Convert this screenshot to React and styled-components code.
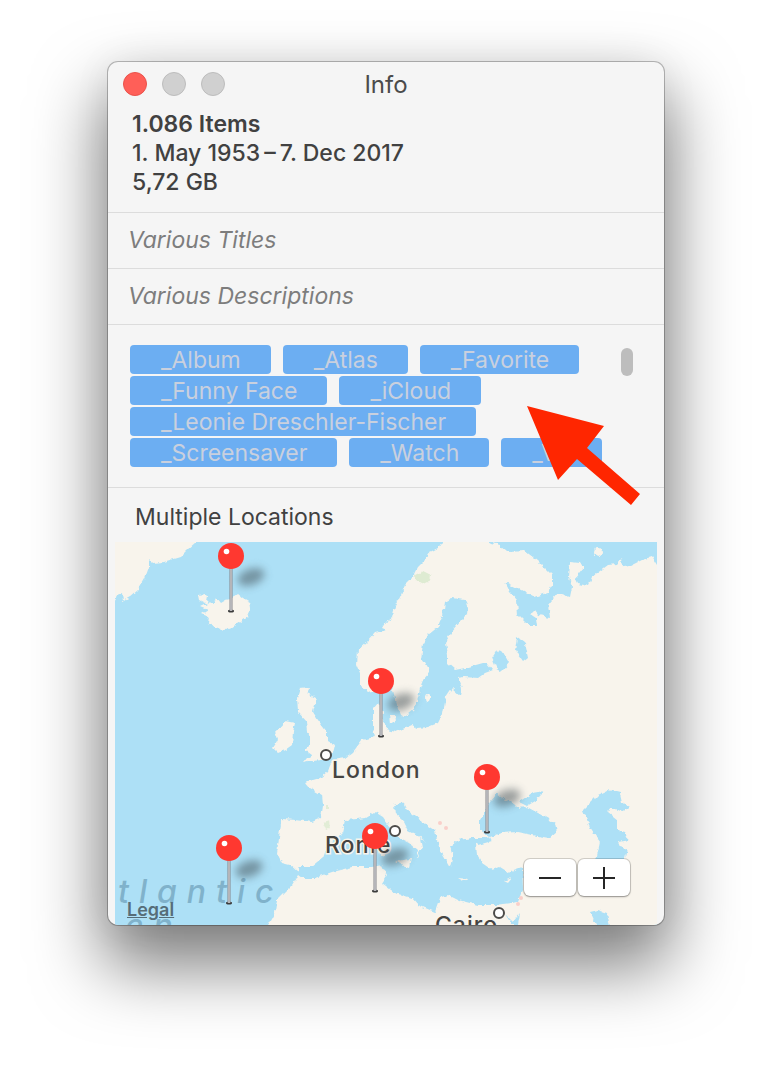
import styled, { createGlobalStyle } from "styled-components";

const keywords = [
    "_Album",
    "_Atlas",
    "_Favorite",
    "_Funny Face",
    "_iCloud",
    "_Leonie Dreschler-Fischer",
    "_Screensaver",
    "_Watch",
    "_VR",
];

const pins = [
    { id: "iceland", x: 231, y: 611 },
    { id: "denmark", x: 381, y: 736 },
    { id: "bosporus", x: 487, y: 832 },
    { id: "madeira", x: 229, y: 903 },
    { id: "tunisia", x: 375, y: 891 },
];

const cities = [
    { name: "London", dotX: 326, dotY: 755, x: 332, y: 778 },
    { name: "Rome", dotX: 395, dotY: 831, x: 325, y: 853 },
    { name: "Cairo", dotX: 499, dotY: 913, x: 435, y: 933 },
];

const land = [
    // Greenland
    "105,532 206,532 196,542 187,550 180,557 163,562 153,563 149,559 149,567 145,578 138,590 130,597 123,601 122,593 117,595 115,602 105,604",
    // Iceland
    "198,595 205,594 208,597 207,602 213,604 216,598 220,603 225,600 231,599 238,594 243,598 250,602 251,608 247,617 238,623 231,628 225,630 215,627 208,623 209,617 202,614 208,610 201,607 207,604 199,600",
    // Europe, Asia and North Africa
    "442,542 438,548 430,552 425,560 418,567 413,577 405,585 401,595 395,607 392,618 385,623 382,628 387,630 375,633 367,642 358,650 357,665 360,672 360,685 368,692 378,690 387,685 392,687 395,698 398,708 402,717 407,715 415,708 418,698 420,688 423,680 430,672 425,663 421,658 423,645 428,635 438,627 443,615 445,602 452,598 465,600 468,607 467,615 460,622 452,632 445,643 447,655 447,663 455,670 465,668 483,663 487,663 493,670 485,673 478,678 465,677 458,678 462,688 461,696 452,688 446,697 443,713 438,723 428,727 418,728 412,725 405,728 395,732 387,730 386,724 382,722 383,712 378,702 373,708 373,727 375,737 362,740 353,752 345,758 332,760 327,772 320,778 313,780 305,782 310,788 322,795 323,805 321,818 312,822 295,820 282,819 280,830 277,853 282,863 290,865 298,872 300,867 312,867 323,858 327,847 342,833 345,820 357,819 365,818 375,812 383,817 390,827 398,837 410,843 418,850 417,857 422,848 420,838 427,843 418,835 408,830 403,820 395,813 394,805 403,802 407,810 420,820 435,830 437,840 442,853 450,867 453,855 450,847 458,840 472,838 484,838 490,840 476,844 477,855 482,863 492,870 500,867 508,872 522,867 523,890 518,902 495,905 478,905 458,900 448,895 440,898 435,912 418,905 412,898 395,893 382,883 387,875 382,865 372,867 352,867 332,872 315,878 302,878 298,875 292,885 277,900 275,912 262,935 667,935 667,532 442,532",
    // Great Britain
    "300,688 310,687 307,693 317,698 313,712 318,720 327,732 327,740 335,745 333,753 323,760 313,761 303,763 307,758 312,755 305,750 310,745 310,738 308,732 307,722 298,712 297,698",
    // Ireland
    "275,732 285,721 295,723 293,732 292,745 285,750 278,753 273,748 278,740",
    // Sicily, Zealand and Sardinia
    "395,861 411,859 409,867 402,865",
    "389,715 395,715 396,722 390,724",
    "379,843 385,842 385,856 380,857",
];

const water = [
    // Barents and White Sea
    "488,532 488,542 500,545 508,552 525,551 538,561 552,575 552,585 547,593 535,597 522,590 505,582 510,592 517,600 518,615 528,625 537,625 536,618 530,614 535,611 538,615 550,617 548,605 558,593 570,597 572,587 569,578 570,562 580,563 583,568 575,578 578,584 588,586 592,577 608,565 617,564 622,558 623,567 630,566 642,560 652,557 657,565 667,566 667,532",
    // Ladoga and Onega
    "497,650 503,652 509,663 503,670 498,672 492,658",
    "517,637 525,643 528,657 523,661 515,650",
    // Black Sea and Azov
    "497,794 504,799 513,803 518,808 527,807 538,813 555,823 557,832 550,838 532,835 517,832 502,833 490,837 480,830 480,820 490,802",
    "519,802 532,793 544,791 537,800 527,806",
    // Caspian Sea
    "583,810 598,795 608,790 620,793 622,802 630,807 622,812 610,807 608,812 618,820 618,830 625,832 629,840 618,842 620,847 627,849 623,865 595,865 600,842 590,827",
    // Persian Gulf and Red Sea
    "590,912 598,910 607,913 612,935 600,935",
    "505,914 513,922 520,913 518,925 512,925",
];

const InfoMap = () => {
    return (
        <MapSvg viewBox="115 542 542 383" preserveAspectRatio="xMidYMid slice" role="img" aria-label="Map">
            <defs>
                <filter id="coast" x="-5%" y="-5%" width="110%" height="110%">
                    <feTurbulence type="fractalNoise" baseFrequency="0.2" numOctaves="2" seed="4" />
                    <feDisplacementMap in="SourceGraphic" scale="5" xChannelSelector="R" yChannelSelector="G" />
                </filter>
                <filter id="soft" x="-60%" y="-100%" width="220%" height="300%">
                    <feGaussianBlur stdDeviation="4" />
                </filter>
                <linearGradient id="needle">
                    <stop offset="0" stopColor="#85858a" />
                    <stop offset="0.5" stopColor="#cdcdd0" />
                    <stop offset="1" stopColor="#85858a" />
                </linearGradient>
            </defs>
            <rect x="105" y="532" width="562" height="403" fill="#ade0f6" />
            <g filter="url(#coast)">
                {land.map((points) => <polygon key={points} points={points} fill="#f8f4ec" />)}
                {water.map((points) => <polygon key={points} points={points} fill="#ade0f6" />)}
                <path d="M474 841l16-4 2 4-14 4z" fill="#ade0f6" />
                <ellipse cx="598" cy="552" rx="4" ry="5" fill="#f8f4ec" />
                <ellipse cx="428" cy="697" rx="2" ry="4" fill="#f8f4ec" />
                <path d="M504 881l8-3-4 5z M458 878l10 1-5 2z" fill="#f8f4ec" />
                <path d="M415 575l8-4 8 4-1 6-6 3-8-4z" fill="#deebd2" />
                <path d="M323 823l6-2 1 7-4 2z M326 805l3 0 0 4-3 0z" fill="#e2edd6" />
            </g>
            <g fill="#f9cfca">
                <circle cx="440" cy="823" r="2" />
                <circle cx="446" cy="828" r="2" />
                <circle cx="521" cy="898" r="2" />
                <circle cx="518" cy="904" r="2" />
            </g>
            <OceanLabel x="118" y="903">tlantic</OceanLabel>
            <OceanLabel x="125" y="937">en</OceanLabel>
            {cities.map(({ name, dotX, dotY, x, y }) => (
                <g key={name}>
                    <circle cx={dotX} cy={dotY} r="5" fill="#fff" stroke="#4c4b49" strokeWidth="2" />
                    <CityLabel x={x} y={y}>{name}</CityLabel>
                </g>
            ))}
            {pins.map(({ id, x, y }) => (
                <g key={id} transform={`translate(${x} ${y})`}>
                    <ellipse cx="20" cy="-34" rx="14" ry="8" fill="#3c4a50" opacity="0.5" transform="rotate(-20 20 -34)" filter="url(#soft)" />
                    <ellipse cx="0" cy="0" rx="3" ry="1.5" fill="#3b3b3b" />
                    <rect x="-1.5" y="-44" width="3" height="44" fill="url(#needle)" />
                    <circle cx="0" cy="-55" r="13" fill="#ff3830" />
                    <circle cx="-4.5" cy="-59.5" r="2.8" fill="#fff" />
                </g>
            ))}
        </MapSvg>
    );
};

const App = () => {
    return (
        <Page>
            <GlobalStyle />
            <Window>
                <TitleBar>
                    <Lights>
                        <Light type="button" aria-label="Close" $close />
                        <Light type="button" aria-label="Minimize" />
                        <Light type="button" aria-label="Zoom" />
                    </Lights>
                    <Title>Info</Title>
                </TitleBar>
                <Summary>
                    <strong>1.086 Items</strong>
                    <span>1. May 1953{"\u2009"}–{"\u2009"}7. Dec 2017</span>
                    <span>5,72 GB</span>
                </Summary>
                <Field aria-label="Title" placeholder="Various Titles" />
                <Field aria-label="Description" placeholder="Various Descriptions" />
                <Keywords>
                    <TagList>
                        {keywords.map((keyword) => <Tag key={keyword}>{keyword}</Tag>)}
                    </TagList>
                    <Thumb />
                    <Arrow viewBox="0 0 113 100" aria-hidden="true">
                        <polygon points="0,0 77,20 60,42 113,88 104,99 50,53 31,74" fill="#ff2600" />
                    </Arrow>
                </Keywords>
                <Location>Multiple Locations</Location>
                <MapArea>
                    <InfoMap />
                    <Legal href="#legal">Legal</Legal>
                    <ZoomButtons>
                        <ZoomButton type="button" aria-label="Zoom out">
                            <svg width="22" height="22" viewBox="0 0 22 22"><path d="M0 11h22" stroke="#262626" strokeWidth="2" /></svg>
                        </ZoomButton>
                        <ZoomButton type="button" aria-label="Zoom in">
                            <svg width="22" height="22" viewBox="0 0 22 22"><path d="M0 11h22M11 0v22" stroke="#262626" strokeWidth="2" /></svg>
                        </ZoomButton>
                    </ZoomButtons>
                </MapArea>
            </Window>
        </Page>
    );
};

const GlobalStyle = createGlobalStyle`
    * {
        box-sizing: border-box;
    }
    body {
        margin: 0;
        background: #fff;
        font-family: Inter, "Liberation Sans", sans-serif;
        font-size: 23px;
        color: #414141;
    }
`;

const Page = styled.main`
    padding: 62px 108px 154px;
    overflow: hidden;
`;

const Window = styled.section`
    background: #f5f5f5;
    border-radius: 10px;
    overflow: hidden;
    box-shadow: 0 0 0 1px rgba(0,0,0,0.25), 0 36px 68px 6px rgba(0,0,0,0.5), 0 0 40px rgba(0,0,0,0.06);
`;

const TitleBar = styled.header`
    display: grid;
    grid-template-columns: 1fr auto 1fr;
    align-items: center;
    height: 44px;
    padding: 0 15px;
`;

const Lights = styled.div`
    display: flex;
    gap: 15px;
`;

const Light = styled.button`
    width: 24px;
    height: 24px;
    padding: 0;
    border: 1px solid ${(props) => (props.$close ? "#e9524b" : "#bcbcbc")};
    border-radius: 50%;
    background: ${(props) => (props.$close ? "#ff5f58" : "#d0d0d0")};
`;

const Title = styled.h1`
    margin: 0;
    font-size: 24px;
    font-weight: 400;
    color: #4b4b4b;
`;

const Summary = styled.div`
    display: flex;
    flex-direction: column;
    padding: 4px 24px 15px;
    font-weight: 500;
    line-height: 29px;
    strong {
        font-weight: 600;
    }
`;

const Field = styled.input`
    display: block;
    width: 100%;
    height: 56px;
    padding: 0 20px 2px;
    border: 0;
    border-top: 1px solid #dcdcdc;
    background: transparent;
    font: inherit;
    font-style: italic;
    &::placeholder {
        color: #7d7d7d;
        opacity: 1;
    }
`;

const Keywords = styled.div`
    position: relative;
    display: flex;
    justify-content: space-between;
    padding: 20px 31px 20px 22px;
    border-top: 1px solid #dcdcdc;
    border-bottom: 1px solid #dcdcdc;
`;

const TagList = styled.ul`
    display: flex;
    flex-wrap: wrap;
    flex: 1;
    gap: 2px 12px;
    margin: 0;
    padding: 0;
    list-style: none;
`;

const Tag = styled.li`
    padding: 2px 30px 0 31px;
    border-radius: 4px;
    background: #6caef2;
    color: #c9d0de;
    line-height: 27px;
`;

const Thumb = styled.div`
    width: 12px;
    height: 28px;
    margin-top: 3px;
    border-radius: 6px;
    background: #bdbdbd;
`;

const Arrow = styled.svg`
    position: absolute;
    top: 81px;
    right: 24px;
    width: 113px;
    height: 100px;
    z-index: 1;
`;

const Location = styled.h2`
    margin: 0;
    padding: 0 27px;
    font-size: 23px;
    font-weight: 400;
    line-height: 58px;
    height: 54px;
`;

const MapArea = styled.div`
    position: relative;
    margin: 0 7px;
`;

const MapSvg = styled.svg`
    display: block;
    width: 100%;
`;

const CityLabel = styled.text`
    font-size: 23px;
    font-weight: 500;
    letter-spacing: 1px;
    fill: #454442;
    stroke: #f8f4ec;
    stroke-width: 3px;
    paint-order: stroke;
`;

const OceanLabel = styled.text`
    font-size: 32px;
    font-style: italic;
    font-weight: 500;
    letter-spacing: 10px;
    fill: #80b2cb;
`;

const Legal = styled.a`
    position: absolute;
    left: 12px;
    bottom: 5px;
    font-size: 18px;
    font-weight: 600;
    color: #566d78;
`;

const ZoomButtons = styled.div`
    position: absolute;
    right: 27px;
    bottom: 29px;
    display: flex;
    gap: 2px;
`;

const ZoomButton = styled.button`
    display: flex;
    align-items: center;
    justify-content: center;
    width: 52px;
    height: 37px;
    padding: 0;
    border: 0;
    border-radius: 6px;
    background: #fff;
    box-shadow: 0 0 0 1px rgba(0,0,0,0.15), 0 1px 2px rgba(0,0,0,0.3);
`;

export default App;
